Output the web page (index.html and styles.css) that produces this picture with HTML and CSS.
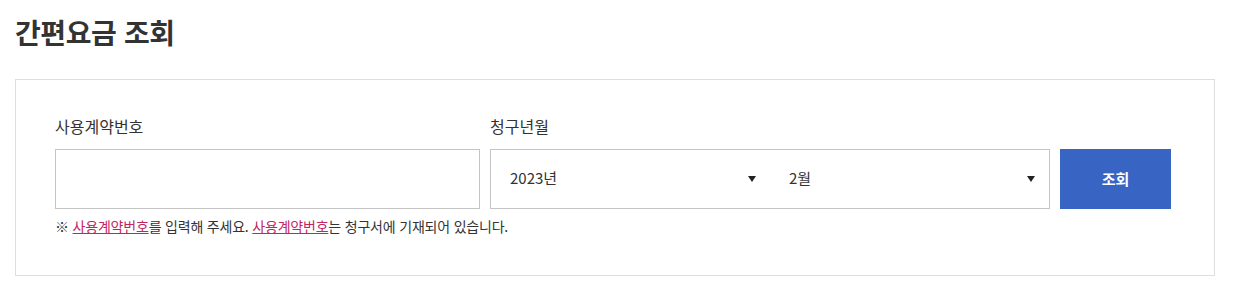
FILE: index.html
```html
<!DOCTYPE html>
<html lang="ko">
<head>
<meta charset="utf-8">
<link rel="stylesheet" href="styles.css">
</head>
<body>
<h1 class="title">간편요금 조회</h1>
<div class="panel">
  <div class="row">
    <div class="field field-contract">
      <label class="label">사용계약번호</label>
      <div class="input"></div>
    </div>
    <div class="field field-month">
      <label class="label">청구년월</label>
      <div class="selects">
        <div class="select"><span>2023년</span><span class="arrow"></span></div>
        <div class="select"><span>2월</span><span class="arrow"></span></div>
      </div>
    </div>
    <button class="btn">조회</button>
  </div>
  <p class="help">※ <a class="link">사용계약번호</a>를 입력해 주세요. <a class="link">사용계약번호</a>는 청구서에 기재되어 있습니다.</p>
</div>
</body>
</html>
```
FILE: styles.css
```css
* { box-sizing: border-box; }
body {
  margin: 0;
  padding: 0 22px 0 15px;
  font-family: "Noto Sans CJK KR", "Noto Sans", sans-serif;
  color: #333;
  background: #fff;
}
.title {
  margin: 0;
  padding-top: 12px;
  font-size: 28px;
  line-height: 40px;
  font-weight: 700;
  color: #333;
  letter-spacing: -0.4px;
}
.panel {
  margin-top: 27px;
  width: 1200px;
  height: 197px;
  border: 1px solid #dedede;
  padding: 35px 40px 0 39px;
}
.row {
  display: flex;
  align-items: flex-end;
  gap: 10px;
}
.field { display: flex; flex-direction: column; }
.label {
  font-size: 16px;
  line-height: 23px;
  color: #333;
  margin-bottom: 11px;
}
.field-contract { width: 425px; }
.input {
  height: 60px;
  border: 1px solid #c4c4c4;
  background: #fff;
}
.field-month { width: 560px; }
.selects {
  display: flex;
  height: 60px;
  border: 1px solid #c4c4c4;
}
.select {
  flex: 1;
  display: flex;
  align-items: center;
  justify-content: space-between;
  padding: 0 14px 3px 19px;
  font-size: 15px;
  color: #333;
}
.arrow {
  width: 0;
  height: 0;
  margin-top: 3px;
  border-left: 4px solid transparent;
  border-right: 4px solid transparent;
  border-top: 6px solid #222;
}
.btn {
  width: 111px;
  height: 60px;
  border: 0;
  background: #3865c4;
  color: #fff;
  font-family: inherit;
  font-size: 15px;
  font-weight: 700;
  padding: 0 0 1px;
}
.help {
  margin: 7px 0 0;
  font-size: 14px;
  line-height: 20px;
  letter-spacing: -0.2px;
  color: #333;
}
.link {
  color: #c3255f;
  text-decoration: underline;
}
```
